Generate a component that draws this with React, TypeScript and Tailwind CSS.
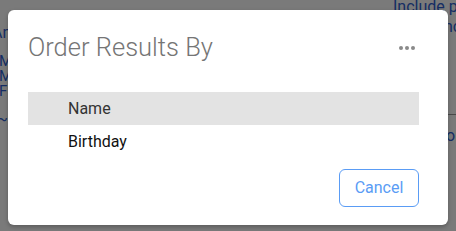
import React from "react";

export default function App() {
  return (
    <div className="relative w-[456px] h-[231px] overflow-hidden bg-white" style={{ fontFamily: "Roboto, 'Liberation Sans', sans-serif" }}>
      {/* underlying page */}
      <div className="absolute left-[393px] top-[-3px] text-[16px] leading-[20px] text-[#2f5fd0] whitespace-nowrap">Include p</div>
      <div className="absolute left-[440px] top-[17px] text-[16px] leading-[20px] text-[#2f5fd0] whitespace-nowrap">inc</div>
      <div className="absolute left-[-8px] top-[23px] text-[16px] leading-[20px] text-[#2f5fd0] whitespace-nowrap">Ani</div>
      <div className="absolute left-[-1px] top-[54px] text-[15px] leading-[14px] text-[#2f5fd0] whitespace-nowrap">M</div>
      <div className="absolute left-[-1px] top-[69px] text-[15px] leading-[14px] text-[#2f5fd0] whitespace-nowrap">M</div>
      <div className="absolute left-[-1px] top-[84px] text-[15px] leading-[14px] text-[#2f5fd0] whitespace-nowrap">FI</div>
      <div className="absolute left-[-3px] top-[112px] text-[16px] leading-[16px] text-[#2f5fd0]">~</div>
      <div className="absolute left-[440px] top-[114px] w-[20px] h-px bg-[#999]" />
      <div className="absolute left-[446px] top-[126px] text-[16px] leading-[20px] text-[#2f5fd0]">o</div>
      {/* overlay */}
      <div className="absolute inset-0 bg-black/[0.52] pl-[8px] pt-[10px]">
        <div className="w-[440px] h-[215px] bg-white rounded-[6px] shadow-[0_2px_4px_rgba(0,0,0,0.25)] pl-[20px] pr-[29px] pt-[21px] flex flex-col">
          <div className="flex items-center justify-between h-[32px]">
            <div className="text-[25.5px] leading-[32px] font-light text-[#757575] whitespace-nowrap">Order Results By</div>
            <div className="flex gap-[2px] mr-[4px] mt-[1px]">
              <span className="block w-[4px] h-[4px] rounded-full bg-[#8a8a8a]" />
              <span className="block w-[4px] h-[4px] rounded-full bg-[#8a8a8a]" />
              <span className="block w-[4px] h-[4px] rounded-full bg-[#8a8a8a]" />
            </div>
          </div>
          <div className="mt-[29px] flex flex-col">
            <div className="h-[33px] bg-[#e3e3e3] pl-[40px] flex items-center text-[16px] text-[#333]">Name</div>
            <div className="h-[33px] pl-[40px] flex items-center text-[16px] text-[#111]">Birthday</div>
          </div>
          <div className="mt-[11px] flex justify-end">
            <button className="w-[80px] h-[38px] border border-[#5a9cf5] rounded-[6px] text-[16px] text-[#5a9cf5] bg-white">Cancel</button>
          </div>
        </div>
      </div>
    </div>
  );
}
